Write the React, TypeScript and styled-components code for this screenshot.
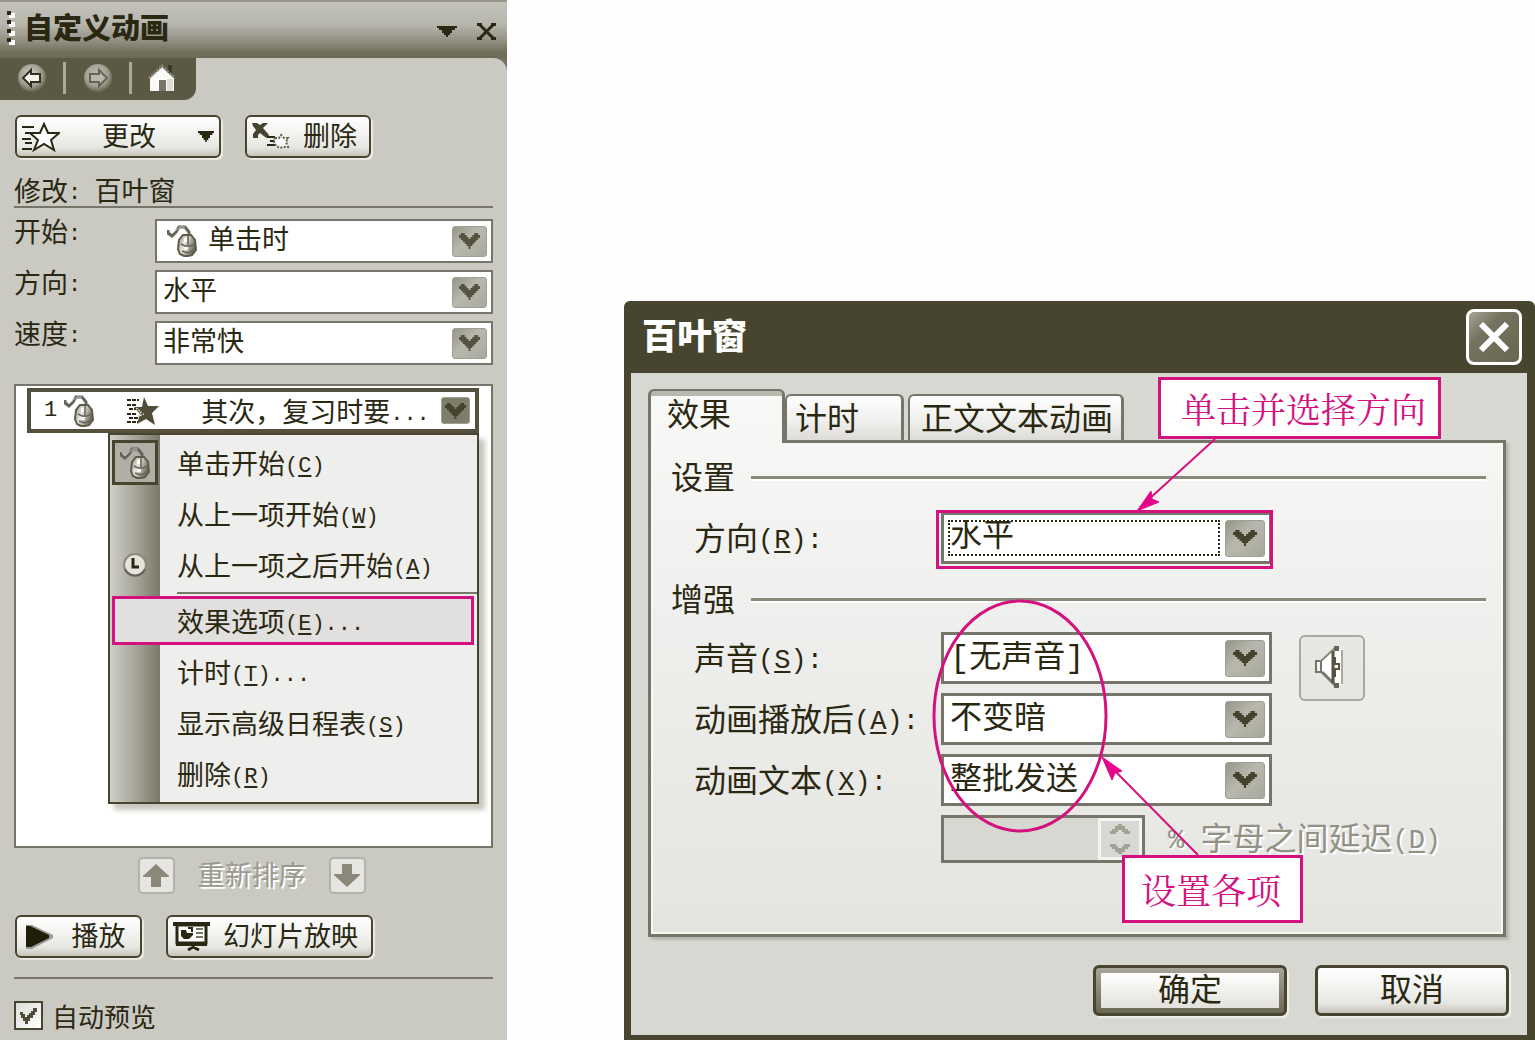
import React, { useId } from 'react';
import styled, { createGlobalStyle, css } from 'styled-components';

const ink = '#2a2812';
const edge = '#77756a';
const dark = '#474530';
const pink = '#d4127f';
const cjk = '"Noto Sans CJK SC", sans-serif';
const face = 'linear-gradient(#ffffff 0%, #f3f3f1 40%, #e6e6e2 78%, #c6c5bb 100%)';

const GlobalStyle = createGlobalStyle`
  *, *::before, *::after { box-sizing: border-box; }
  body { margin: 0; background: #fefefe; color: ${ink}; font-family: ${cjk}; }
  button, select, input { font: inherit; color: inherit; margin: 0; padding: 0; }
  svg { display: block; flex: none; }
  h1, h2, p { margin: 0; }
`;

const Page = styled.main`
  display: flex;
  gap: 117px;
  min-height: 100vh;
`;

/* ---------- shared parts ---------- */

const Latin = styled.span<{ $large?: boolean }>`
  font-family: 'Liberation Mono', monospace;
  font-size: ${(p) => (p.$large ? 27 : 22)}px;
  line-height: 0;
  vertical-align: 2px;
  white-space: pre;
  u {
    text-decoration-thickness: 2px;
    text-underline-offset: 3px;
  }
`;

const PushButton = styled.button<{ $width: number }>`
  display: flex;
  align-items: center;
  width: ${(p) => p.$width}px;
  height: 43px;
  padding: 0 5px;
  border: 2px solid ${dark};
  border-radius: 6px;
  background: ${face};
  box-shadow: 2px 2px 1px #ecebe2;
  font-size: 27px;
  line-height: 32px;
  white-space: nowrap;
`;

const ButtonText = styled.span`
  flex: 1;
  padding-bottom: 4px;
  text-align: center;
`;

const Combo = styled.span<{ $large?: boolean }>`
  display: flex;
  align-items: center;
  flex: ${(p) => (p.$large ? '0 0 331px' : '1')};
  height: ${(p) => (p.$large ? 52 : 44)}px;
  padding: 0 4px 0 6px;
  border: ${(p) => (p.$large ? 3 : 2)}px solid ${edge};
  background: #fff;
`;

const NativeSelect = styled.select<{ $focusRing?: boolean }>`
  appearance: none;
  flex: 1;
  min-width: 0;
  height: 40px;
  padding-top: 2px;
  border: 0;
  border-radius: 0;
  outline: 0;
  background: transparent;
  font-family: 'Liberation Mono', ${cjk};
  font-size: inherit;
  line-height: 36px;
  ${(p) =>
    p.$focusRing &&
    css`
      height: 36px;
      margin: 0 5px 0 -2px;
      padding: 0 2px;
      outline: 2px dotted ${ink};
      outline-offset: -2px;
    `}
`;

const ArrowBox = styled.span<{ $size?: 'small' | 'large'; $dim?: boolean }>`
  display: grid;
  place-items: center;
  width: ${(p) => (p.$size === 'large' ? 40 : p.$size === 'small' ? 29 : 35)}px;
  height: ${(p) => (p.$size === 'large' ? 37 : p.$size === 'small' ? 27 : 31)}px;
  flex: none;
  border: 1px solid #a09f93;
  border-radius: 3px;
  background: ${(p) => (p.$dim ? '#7f7d6c' : 'linear-gradient(135deg, #96958a 0%, #b9b8ae 45%, #a9a89d 100%)')};
  pointer-events: none;
`;

const Chevron = ({ color = '#55533f', width = 21 }: { color?: string; width?: number }) => (
  <svg width={width} height="16" viewBox="0 0 22 16" preserveAspectRatio="none">
    <path d="M0 2h2V0h4v2h2v2h2v2h2V4h2V2h2V0h4v2h2v3h-2v2h-2v2h-2v2h-2v2h-2v3h-2v-3H8v-2H6V9H4V7H2V5H0z" fill={color} />
  </svg>
);

/* ---------- icons ---------- */

const Triangle = ({ width = 20 }: { width?: number }) => (
  <svg width={width} height="11" viewBox="0 0 20 11" preserveAspectRatio="none">
    <path d="M0 0h20v2h-2v2h-3v3h-2v2h-2v2H9V9H7V7H5V4H2V2H0z" fill={ink} />
  </svg>
);

const CloseGlyph = () => (
  <svg width="19" height="17" viewBox="0 0 19 17">
    <path d="M0 1.5h5M14 1.5h5M0 15.5h5M14 15.5h5M3 2l13 13M16 2L3 15" stroke={ink} strokeWidth="3" fill="none" />
  </svg>
);

const Grip = () => (
  <svg width="8" height="34" viewBox="0 0 8 34">
    {[0, 9, 18, 27].map((y) => (
      <g key={y}>
        <path d={`M2 ${y + 2}h6v5H2z`} fill="#fff" />
        <path d={`M0 ${y}h4v4H0z`} fill={ink} />
      </g>
    ))}
  </svg>
);

const RoundArrow = ({ forward }: { forward?: boolean }) => {
  const id = useId();
  return (
    <svg width="30" height="30" viewBox="0 0 30 30">
      <defs>
        <radialGradient id={id} cx=".45" cy=".4" r=".65">
          <stop offset="0" stopColor={forward ? '#bdbcb0' : '#d8d7ce'} />
          <stop offset=".6" stopColor={forward ? '#a3a293' : '#a09f90'} />
          <stop offset="1" stopColor="#55533f" />
        </radialGradient>
      </defs>
      <circle cx="15" cy="15" r="14" fill={`url(#${id})`} />
      <path
        d="M6 15l8-8v4h9v8h-9v4z"
        transform={forward ? 'matrix(-1 0 0 1 30 0)' : undefined}
        fill={forward ? '#b9b8ac' : '#f4f4ee'}
        stroke={forward ? '#66645a' : '#32301c'}
        strokeWidth="2"
      />
    </svg>
  );
};

const HomeIcon = () => (
  <svg width="28" height="28" viewBox="0 0 28 28">
    <path d="M20 1h4v9h-4z" fill="#3b3924" />
    <path d="M2 14v13h24V14L14 3z" fill="#fafaf7" />
    <path d="M1 14L14 2l13 12" fill="none" stroke="#8f8e80" strokeWidth="2.5" strokeDasharray="2 1.5" />
    <path d="M11 16h7v11h-7z" fill="#77756a" />
    <path d="M19 15h6v12h-6z" fill="#dddcd5" />
  </svg>
);

const StarOutline = () => (
  <svg width="38" height="30" viewBox="0 0 38 30">
    <path d="M0 5h12M3 11h6M0 17h9M3 21h7M0 27h10" stroke={ink} strokeWidth="2" />
    <path d="M22 2l4 9h11l-8 7 3 10-10-6-10 6 4-10-8-7h10z" fill="#fff" stroke={ink} strokeWidth="2" />
  </svg>
);

const RemoveIcon = () => (
  <svg width="44" height="27" viewBox="0 0 44 27">
    <path d="M0 0h5l3 2 3-2h5l-5 5 6 7-1 3-3-1-5-4-2 2v3H1v-4l3-4-3-4z" fill="#45432d" />
    <path d="M15 14h8M18 18h5M15 22h8" stroke={ink} strokeWidth="2" />
    <path d="M23 15h4l2-3 3 3h4l-2 4 2 5h-5l-3 1-4-2-2-4z" fill="#f8f8f6" stroke="#5d5b48" strokeWidth="2" strokeDasharray="2 1.5" />
  </svg>
);

const MouseIcon = () => {
  const id = useId();
  return (
    <svg width="30" height="32" viewBox="0 0 30 32">
      <defs>
        <linearGradient id={id} x1="0" x2="1" y1="0" y2=".4">
          <stop offset="0" stopColor="#8c8b7f" />
          <stop offset=".45" stopColor="#e9e8e1" />
          <stop offset="1" stopColor="#6a6857" />
        </linearGradient>
      </defs>
      <path d="M1 5v3l4 3 4-4 3-5h6l4 5v5" fill="none" stroke="#66645a" strokeWidth="3" />
      <path d="M2 5l3 4 4-4 4-3h5" fill="none" stroke="#c4c3b9" strokeWidth="1" />
      <path d="M16 10h8l4 5 1 10-4 5-4 1h-4l-4-2-2-5 1-9z" fill={`url(#${id})`} stroke="#5e5c49" strokeWidth="2" />
      <path d="M14 19l4 2h5l5-2M21 11v9M15 26l5 2 6-2" fill="none" stroke="#66645a" strokeWidth="1.5" />
      <path d="M17 13h3v4h-3zM17 22h4v3h-4z" fill="#fff" opacity=".8" />
    </svg>
  );
};

const StarSolid = () => (
  <svg width="32" height="28" viewBox="0 0 32 28">
    <path d="M0 3h12M0 8h10M2 12h10M0 17h10M2 21h9M0 25h12" stroke={ink} strokeWidth="2" strokeDasharray="4 1" />
    <path d="M17 0l4 9h11l-7 7 3 12-9-6-9 5 3-10-6-7h8z" fill="#4f4d38" />
    <path d="M9 11l5 4-2 4 5-2" fill="none" stroke="#d8d7ce" strokeWidth="1.5" strokeDasharray="2 1" />
  </svg>
);

const ClockIcon = () => (
  <svg width="26" height="26" viewBox="0 0 26 26">
    <circle cx="13" cy="13" r="11" fill="#e4e3dc" stroke="#8a887b" strokeWidth="2" />
    <path d="M3 17a11 11 0 0 0 20 0" fill="none" stroke="#66645a" strokeWidth="2" />
    <path d="M11 6v9h6" fill="none" stroke={ink} strokeWidth="3" />
  </svg>
);

const MoveArrow = ({ down }: { down?: boolean }) => (
  <svg width="26" height="23" viewBox="0 0 26 23">
    <path d="M13 0l13 12v1h-8v10H8V13H0v-1z" fill="#8a8979" transform={down ? 'matrix(1 0 0 -1 0 23)' : undefined} />
  </svg>
);

const PlayIcon = () => (
  <svg width="40" height="24" viewBox="-4 0 40 24">
    <path d="M0 0h6l21 10v3L6 24H0z" fill="#9b9a8e" />
    <path d="M0 1h4l19 9v3L5 22H0z" fill="#1f1d08" />
  </svg>
);

const ScreenIcon = () => (
  <svg width="42" height="29" viewBox="0 0 42 29">
    <path d="M0 0h37v4H0z" fill={ink} />
    <path d="M4 3h29v18H4z" fill="#fff" stroke={ink} strokeWidth="3" />
    <path d="M3 20h31v4H3z" fill={ink} />
    <path d="M8 8h5l1 3h6v2l-4 4h-5l-3-3z" fill={ink} />
    <path d="M15 6h4v4" fill="none" stroke={ink} strokeWidth="2" />
    <path d="M23 7h7M23 11h7M23 15h7" stroke={edge} strokeWidth="2" />
    <path d="M20 23v2l-5 3M20 25l6 3" stroke={ink} strokeWidth="3" fill="none" />
  </svg>
);

const SpeakerIcon = () => (
  <svg width="32" height="44" viewBox="0 0 32 44">
    <path d="M1 17h6L20 4h8v36h-8L7 27H1z" fill="#fff" />
    <path d="M2 16v11h5V16z" fill="#f4f4f1" stroke="#77756a" strokeWidth="2" />
    <path d="M7 16L21 3" fill="none" stroke="#8a8979" strokeWidth="2" />
    <path d="M8 27l13 13" fill="none" stroke="#77756a" strokeWidth="3" />
    <path d="M19 6v32" fill="none" stroke="#55533f" strokeWidth="3" />
    <path d="M20 1h5v5h-5zM20 38h5v5h-5z" fill="#66645a" />
    <path d="M21 12v7h4v5h-4v8" fill="none" stroke="#55533f" strokeWidth="2" />
    <path d="M28 5v34" stroke="#aaa99d" strokeWidth="2" />
  </svg>
);

/* ---------- task pane ---------- */

const Pane = styled.aside`
  flex: none;
  width: 507px;
  background: #73715f;
`;

const PaneHeader = styled.header`
  display: flex;
  align-items: center;
  gap: 9px;
  height: 58px;
  padding: 0 11px 4px 7px;
  border-top: 2px solid #98978a;
  background: linear-gradient(#c4c3bb 0%, #b7b6ad 40%, #918f81 70%, #706e5b 90%, #6c6a57 100%);
  h1 {
    flex: 1;
    padding-bottom: 4px;
    font-size: 29px;
    line-height: 36px;
    font-weight: 900;
  }
`;

const PlainButton = styled.button`
  display: grid;
  place-items: center;
  border: 0;
  background: none;
`;

const HeaderTools = styled.div`
  display: flex;
  align-items: center;
  gap: 20px;
  padding-top: 6px;
`;

const PaneBody = styled.div`
  min-height: calc(100vh - 58px);
  border-top-right-radius: 14px;
  background: #cac9c2;
`;

const NavTab = styled.nav`
  display: flex;
  align-items: center;
  width: 196px;
  height: 42px;
  padding: 0 20px 2px 17px;
  justify-content: space-between;
  border-bottom-right-radius: 12px;
  background: #5b5944;
`;

const NavRule = styled.span`
  width: 3px;
  height: 32px;
  background: #aaa99b;
`;

const PaneContent = styled.div`
  padding: 15px 14px 10px;
  font-size: 27px;
`;

const ActionRow = styled.div`
  display: flex;
  gap: 24px;
  padding-left: 1px;
`;

const Caption = styled.h2`
  height: 34px;
  margin: 16px 0 11px;
  border-bottom: 2px solid ${edge};
  font-size: 27px;
  font-weight: 400;
  line-height: 32px;
`;

const Settings = styled.div`
  display: grid;
  gap: 7px;
`;

const SettingRow = styled.label`
  display: flex;
  > span:first-child {
    width: 141px;
    line-height: 24px;
  }
`;

const ComboIcon = styled.span`
  padding: 0 11px 0 4px;
`;

const EffectList = styled.div`
  min-height: 464px;
  margin-top: 19px;
  padding: 2px 12px 0 11px;
  border: 2px solid ${edge};
  background: #fff;
`;

const EffectItem = styled.div`
  display: flex;
  align-items: center;
  height: 45px;
  padding: 0 5px 0 13px;
  border: 4px solid #53513d;
  line-height: 36px;
  white-space: nowrap;
`;

const ItemMouse = styled.span`
  margin: 0 33px 0 7px;
`;

const ItemName = styled.span`
  flex: 1;
  padding-left: 42px;
`;

const Menu = styled.div`
  margin-left: 81px;
  padding: 2px 0 3px;
  border: 2px solid ${dark};
  background: linear-gradient(90deg, #d0cfc7 0, #a6a599 25px, #7a7867 50px, transparent 50px) #eeeeec;
  box-shadow: 6px 6px 5px #c8c7bd;
`;

const MenuItem = styled.button<{ $marked?: boolean }>`
  display: flex;
  align-items: center;
  width: 100%;
  height: 51px;
  border: 0;
  background: none;
  line-height: 36px;
  text-align: left;
  white-space: nowrap;
  ${(p) =>
    p.$marked &&
    css`
      width: calc(100% - 5px);
      height: 49px;
      margin: 1px 3px 1px 2px;
      padding-left: 62px;
      border: 3px solid ${pink};
      background: #e1e0de;
    `}
`;

const MenuGlyph = styled.span<{ $active?: boolean }>`
  display: grid;
  place-items: center;
  width: 46px;
  height: 45px;
  margin: 0 19px 0 2px;
  ${(p) =>
    p.$active &&
    css`
      border: 3px solid ${dark};
      background: #b0afa5;
    `}
`;

const MenuRule = styled.div`
  height: 5px;
  padding: 2px 0 1px 67px;
  &::before {
    content: '';
    display: block;
    height: 2px;
    background: ${edge};
  }
`;

const ReorderRow = styled.div`
  display: flex;
  justify-content: center;
  align-items: center;
  gap: 23px;
  margin: 9px 0 21px;
  padding-right: 4px;
  color: #9b9a8e;
  line-height: 34px;
  text-shadow: 2px 2px 0 #fff;
  span {
    padding-bottom: 3px;
  }
`;

const ReorderButton = styled.button`
  display: grid;
  place-items: center;
  width: 37px;
  height: 37px;
  border: 2px solid #b3b2a8;
  border-radius: 5px;
  background: #e6e5e1;
`;

const PaneRule = styled.hr`
  height: 2px;
  margin: 19px 0 22px;
  border: 0;
  background: ${edge};
`;

const CheckRow = styled.label`
  display: flex;
  align-items: center;
  gap: 9px;
  height: 29px;
  font-size: 26px;
  line-height: 26px;
`;

const CheckBox = styled.span`
  position: relative;
  width: 29px;
  height: 29px;
  input {
    display: block;
    appearance: none;
    width: 29px;
    height: 29px;
    border: 2px solid ${dark};
    background: linear-gradient(135deg, #dcdcd7, #fff);
  }
  svg {
    position: absolute;
    left: 6px;
    top: 7px;
    pointer-events: none;
  }
  input:not(:checked) + svg {
    display: none;
  }
`;

/* ---------- dialog ---------- */

const DialogColumn = styled.div`
  display: flex;
  flex: 1;
  min-width: 911px;
  padding-top: 301px;
`;

const Dialog = styled.section`
  position: relative;
  display: flex;
  flex-direction: column;
  flex: 1;
  padding: 0 8px 5px 7px;
  border-radius: 6px 6px 0 0;
  background: ${dark};
  font-size: 32px;
`;

const DialogHeader = styled.header`
  display: flex;
  align-items: center;
  justify-content: space-between;
  height: 72px;
  padding: 0 5px 0 11px;
  color: #fff;
  h2 {
    padding-bottom: 6px;
    font-size: 35px;
    line-height: 44px;
    font-weight: 900;
  }
`;

const DialogClose = styled.button`
  display: grid;
  place-items: center;
  width: 56px;
  height: 56px;
  border: 3px solid #fff;
  border-radius: 8px;
  background: linear-gradient(135deg, #a5a498 0%, #75735f 35%, #68664f 100%);
`;

const DialogBody = styled.div`
  flex: 1;
  padding: 16px 21px 0 17px;
  background: #d8d8d2;
`;

const Tabs = styled.div`
  display: flex;
  align-items: flex-end;
`;

const Tab = styled.button<{ $width: number; $active?: boolean; $gap?: boolean }>`
  width: ${(p) => p.$width}px;
  height: 46px;
  margin-left: ${(p) => (p.$gap ? 4 : 0)}px;
  padding: 0 0 4px ${(p) => (p.$gap ? 11 : 8)}px;
  border: 2px solid ${edge};
  border-width: 2px 3px 0 2px;
  border-radius: 6px 6px 0 0;
  background: linear-gradient(#fff, #eeeeec 60%, #dcdbd6);
  line-height: 40px;
  text-align: left;
  white-space: nowrap;
  ${(p) =>
    p.$active &&
    css`
      position: relative;
      height: 54px;
      margin-bottom: -3px;
      padding: 0 0 10px 16px;
      border-width: 2px 3px 0 3px;
      background: linear-gradient(#b9b8ae 5px, #f8f8f7 5px, #f6f6f4);
    `}
`;

const TabPanel = styled.div`
  padding: 12px 17px 71px 20px;
  border: 3px solid ${edge};
  background: linear-gradient(#f6f6f4, #eeeeec 40%, #e4e4e0);
  box-shadow: inset -2px -2px 0 #f8f8f2, inset 2px 0 0 #f8f8f2, 3px 3px 2px #b9b8ae;
`;

const GroupTitle = styled.h2`
  display: flex;
  align-items: center;
  gap: 16px;
  height: 40px;
  font-size: 32px;
  font-weight: 400;
  line-height: 40px;
  &::after {
    content: '';
    flex: 1;
    height: 3px;
    margin-top: 4px;
    background: #8a8979;
    box-shadow: 0 2px 0 #fff;
  }
`;

const SingleField = styled.div`
  padding: 17px 0 13px 23px;
`;

const FieldGroup = styled.div`
  display: flex;
  align-items: flex-start;
  gap: 27px;
  padding: 15px 0 9px 23px;
`;

const Fields = styled.div`
  display: grid;
  gap: 9px;
`;

const Field = styled.label`
  display: flex;
  align-items: center;
  > span:first-child {
    width: 247px;
    padding-bottom: 4px;
    line-height: 40px;
    white-space: nowrap;
  }
`;

const SoundButton = styled.button`
  display: grid;
  place-items: center;
  width: 66px;
  height: 66px;
  margin-top: 3px;
  padding: 0 4px 2px 0;
  border: 2px solid #a9a89d;
  border-radius: 6px;
  background: #e6e6e2;
`;

const DelayRow = styled.label`
  display: flex;
  align-items: center;
  gap: 23px;
  height: 48px;
  padding-left: 270px;
  color: #929184;
  line-height: 44px;
  text-shadow: 2px 2px 0 #fff;
  white-space: nowrap;
  > span:last-child {
    padding-bottom: 6px;
  }
`;

const Spinner = styled.span`
  display: flex;
  width: 204px;
  height: 48px;
  border: 3px solid ${edge};
  background: #d8d8d2;
  input {
    flex: 1;
    min-width: 0;
    border: 0;
    background: none;
  }
`;

const SpinArrows = styled.span`
  display: grid;
  place-items: center;
  width: 44px;
  border: 3px solid #f4f4f1;
  background: #d9d8d4;
`;

const DialogFooter = styled.footer`
  display: flex;
  justify-content: flex-end;
  gap: 28px;
  margin-right: -3px;
  padding: 28px 0 19px;
`;

const FooterButton = styled.button<{ $default?: boolean }>`
  display: flex;
  justify-content: center;
  width: 194px;
  height: 51px;
  border: 3px solid ${dark};
  border-radius: 6px;
  background: ${face};
  box-shadow: 2px 2px 1px #f0efe8;
  line-height: 38px;
  ${(p) =>
    p.$default &&
    css`
      padding: 5px;
      background: linear-gradient(#fff, #e2e1dc) content-box, linear-gradient(#aaa99d, #66644c) border-box;
      line-height: 28px;
    `}
`;

/* ---------- annotations laid over the dialog ---------- */

const Marks = styled.svg`
  position: absolute;
  left: 0;
  top: 0;
  pointer-events: none;
`;

const Callout = styled.p<{ $left: number; $top: number; $width: number; $height: number; $indent: number }>`
  position: absolute;
  left: ${(p) => p.$left}px;
  top: ${(p) => p.$top}px;
  width: ${(p) => p.$width}px;
  height: ${(p) => p.$height}px;
  padding-left: ${(p) => p.$indent}px;
  border: 3px solid ${pink};
  background: #fff;
  color: ${pink};
  font-family: 'Noto Serif CJK SC', ${cjk};
  font-size: 35px;
  line-height: ${(p) => p.$height - 6}px;
  white-space: nowrap;
`;

const Key = ({ k, after = '', large }: { k: string; after?: string; large?: boolean }) => (
  <Latin $large={large}>
    (<u>{k}</u>){after}
  </Latin>
);

const PaneSelect = ({ label, value, icon }: { label: string; value: string; icon?: React.ReactNode }) => (
  <SettingRow>
    <span>
      {label}
      <Latin>:</Latin>
    </span>
    <Combo>
      {icon && <ComboIcon>{icon}</ComboIcon>}
      <NativeSelect>
        <option>{value}</option>
      </NativeSelect>
      <ArrowBox>
        <Chevron />
      </ArrowBox>
    </Combo>
  </SettingRow>
);

const DialogSelect = ({ label, k, value, focused }: { label: string; k: string; value: string; focused?: boolean }) => (
  <Field>
    <span>
      {label}
      <Key k={k} after=":" large />
    </span>
    <Combo $large>
      <NativeSelect $focusRing={focused}>
        <option>{value}</option>
      </NativeSelect>
      <ArrowBox $size="large">
        <Chevron color="#45432d" width={24} />
      </ArrowBox>
    </Combo>
  </Field>
);

const menuItems = [
  { text: '单击开始', k: 'C', after: '', glyph: 'mouse' },
  { text: '从上一项开始', k: 'W', after: '', glyph: '' },
  { text: '从上一项之后开始', k: 'A', after: '', glyph: 'clock' },
  { text: '效果选项', k: 'E', after: '...', glyph: '', marked: true },
  { text: '计时', k: 'T', after: '...', glyph: '' },
  { text: '显示高级日程表', k: 'S', after: '', glyph: '' },
  { text: '删除', k: 'R', after: '', glyph: '' },
];

const TaskPane = () => (
  <Pane>
    <PaneHeader>
      <Grip />
      <h1>自定义动画</h1>
      <HeaderTools>
        <PlainButton aria-label="菜单">
          <Triangle />
        </PlainButton>
        <PlainButton aria-label="关闭">
          <CloseGlyph />
        </PlainButton>
      </HeaderTools>
    </PaneHeader>
    <PaneBody>
      <NavTab>
        <PlainButton aria-label="后退">
          <RoundArrow />
        </PlainButton>
        <NavRule />
        <PlainButton aria-label="前进">
          <RoundArrow forward />
        </PlainButton>
        <NavRule />
        <PlainButton aria-label="主页">
          <HomeIcon />
        </PlainButton>
      </NavTab>
      <PaneContent>
        <ActionRow>
          <PushButton $width={206}>
            <StarOutline />
            <ButtonText>更改</ButtonText>
            <Triangle width={16} />
          </PushButton>
          <PushButton $width={126}>
            <RemoveIcon />
            <ButtonText>删除</ButtonText>
          </PushButton>
        </ActionRow>
        <Caption>
          修改<Latin>: </Latin>百叶窗
        </Caption>
        <Settings>
          <PaneSelect label="开始" value="单击时" icon={<MouseIcon />} />
          <PaneSelect label="方向" value="水平" />
          <PaneSelect label="速度" value="非常快" />
        </Settings>
        <EffectList>
          <EffectItem>
            <Latin>1</Latin>
            <ItemMouse>
              <MouseIcon />
            </ItemMouse>
            <StarSolid />
            <ItemName>
              其次，复习时要<Latin>...</Latin>
            </ItemName>
            <ArrowBox $size="small" $dim>
              <Chevron color="#45432d" />
            </ArrowBox>
          </EffectItem>
          <Menu role="menu">
            {menuItems.map((item, i) => (
              <React.Fragment key={item.k}>
                {i === 3 && <MenuRule role="separator" />}
                <MenuItem role="menuitem" $marked={item.marked}>
                  {!item.marked && (
                    <MenuGlyph $active={item.glyph === 'mouse'}>
                      {item.glyph === 'mouse' && <MouseIcon />}
                      {item.glyph === 'clock' && <ClockIcon />}
                    </MenuGlyph>
                  )}
                  <span>
                    {item.text}
                    <Key k={item.k} after={item.after} />
                  </span>
                </MenuItem>
              </React.Fragment>
            ))}
          </Menu>
        </EffectList>
        <ReorderRow>
          <ReorderButton aria-label="上移">
            <MoveArrow />
          </ReorderButton>
          <span>重新排序</span>
          <ReorderButton aria-label="下移">
            <MoveArrow down />
          </ReorderButton>
        </ReorderRow>
        <ActionRow>
          <PushButton $width={127}>
            <PlayIcon />
            <ButtonText>播放</ButtonText>
          </PushButton>
          <PushButton $width={207}>
            <ScreenIcon />
            <ButtonText>幻灯片放映</ButtonText>
          </PushButton>
        </ActionRow>
        <PaneRule />
        <CheckRow>
          <CheckBox>
            <input type="checkbox" defaultChecked />
            <svg width="17" height="16" viewBox="0 0 17 16">
              <path d="M0 4h3v2h2v3h2V7h2V5h2V3h2V0h4v4h-2v3h-2v3h-3v3H8v3H5v-3H3v-3H1V7H0z" fill="#4f4d38" />
            </svg>
          </CheckBox>
          自动预览
        </CheckRow>
      </PaneContent>
    </PaneBody>
  </Pane>
);

const BlindsDialog = () => (
  <Dialog role="dialog" aria-label="百叶窗">
    <DialogHeader>
      <h2>百叶窗</h2>
      <DialogClose aria-label="关闭">
        <svg width="32" height="30" viewBox="0 0 32 30">
          <path d="M3 2l26 26M29 2L3 28" stroke="#fff" strokeWidth="6" />
        </svg>
      </DialogClose>
    </DialogHeader>
    <DialogBody>
      <Tabs role="tablist">
        <Tab role="tab" aria-selected $active $width={137}>
          效果
        </Tab>
        <Tab role="tab" $width={119}>
          计时
        </Tab>
        <Tab role="tab" $width={216} $gap>
          正文文本动画
        </Tab>
      </Tabs>
      <TabPanel role="tabpanel">
        <GroupTitle>设置</GroupTitle>
        <SingleField>
          <DialogSelect label="方向" k="R" value="水平" focused />
        </SingleField>
        <GroupTitle>增强</GroupTitle>
        <FieldGroup>
          <Fields>
            <DialogSelect label="声音" k="S" value="[无声音]" />
            <DialogSelect label="动画播放后" k="A" value="不变暗" />
            <DialogSelect label="动画文本" k="X" value="整批发送" />
          </Fields>
          <SoundButton aria-label="音量">
            <SpeakerIcon />
          </SoundButton>
        </FieldGroup>
        <DelayRow>
          <Spinner>
            <input type="text" disabled />
            <SpinArrows>
              <svg width="20" height="30" viewBox="0 0 20 30">
                <path d="M8 0h4v2h3v3h3v2h2v3h-6V8h-2V6h-4v2H6v2H0V7h2V5h3V2h3zM8 30h4v-2h3v-3h3v-2h2v-3h-6v2h-2v2h-4v-2H6v-2H0v3h2v2h3v3h3z" fill="#a3a296" />
              </svg>
            </SpinArrows>
          </Spinner>
          <span>
            <Latin $large>% </Latin>字母之间延迟
            <Key k="D" large />
          </span>
        </DelayRow>
      </TabPanel>
      <DialogFooter>
        <FooterButton $default>确定</FooterButton>
        <FooterButton>取消</FooterButton>
      </DialogFooter>
    </DialogBody>
    <Marks width="911" height="739" viewBox="0 0 911 739" fill="none" stroke={pink} strokeWidth="3">
      <path d="M313.5 210.5h334v56h-334z" />
      <ellipse cx="396" cy="415" rx="86" ry="115" />
      <path d="M591 138L524 199M574 554L492 471" strokeWidth="2" />
      <path d="M513 210l14-20 1 8 7 3zM478 456l20 14-7 2-3 7z" fill="#e5058a" stroke="#e5058a" strokeWidth="1" />
    </Marks>
    <Callout $left={534} $top={76} $width={283} $height={62} $indent={20}>
      单击并选择方向
    </Callout>
    <Callout $left={498} $top={554} $width={181} $height={68} $indent={16}>
      设置各项
    </Callout>
  </Dialog>
);

export default function App() {
  return (
    <>
      <GlobalStyle />
      <Page>
        <TaskPane />
        <DialogColumn>
          <BlindsDialog />
        </DialogColumn>
      </Page>
    </>
  );
}
